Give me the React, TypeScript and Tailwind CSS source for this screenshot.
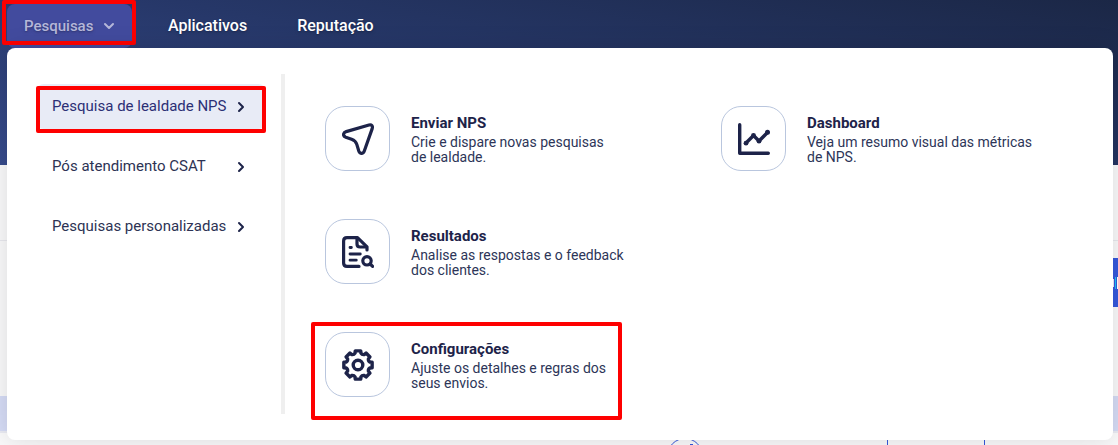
import { ReactNode } from "react";
import { ChevronDown, ChevronRight } from "lucide-react";

const SendIcon = () => (
  <svg viewBox="0 0 32 32" className="size-8" fill="none" stroke="currentColor" strokeWidth="3.2" strokeLinejoin="round">
    <path d="M27 2 L4.2 8.6 C.8 9.8.6 13 3.8 14.2 L9.6 16.2 C12.6 17.2 14 18.6 14.8 21.4 L16.8 28 C17.9 31.2 21.2 31.2 22.3 28 L30.2 5.6 C31 3 29.6 1.2 27 2Z" />
  </svg>
);

const ChartIcon = () => (
  <svg viewBox="0 0 32 32" className="size-8" fill="none" stroke="currentColor" strokeWidth="3.4" strokeLinecap="round" strokeLinejoin="round">
    <path d="M1.7 1.7V30.3H30.3" />
    <path d="M8 20 15.5 12.5 21 18 29.5 9.5" />
    <g fill="currentColor" stroke="none">
      <circle cx="8" cy="20.2" r="2.4" />
      <circle cx="15.5" cy="12.3" r="2.4" />
      <circle cx="21" cy="18.2" r="2.4" />
      <circle cx="29.5" cy="9.3" r="2.5" />
    </g>
  </svg>
);

const ReportIcon = () => (
  <svg viewBox="0 0 32 32" className="size-8" fill="none" stroke="currentColor" strokeWidth="3.2" strokeLinecap="round" strokeLinejoin="round">
    <path d="M17 30.4H5Q1.6 30.4 1.6 27V5Q1.6 1.6 5 1.6H15.5L25 10.8V14" />
    <path d="M15 2V8Q15 11 18 11H24.5" />
    <path d="M8 11.5H9.4M8 18H18.3M8 24.2H14.3" strokeWidth="2.8" />
    <circle cx="25" cy="24.8" r="4.2" />
    <path d="M28.2 28 30.6 30.4" />
  </svg>
);

const polar = (angle: number, radius: number) => {
  const rad = (angle * Math.PI) / 180;
  return `${(16 + radius * Math.cos(rad)).toFixed(2)} ${(16 + radius * Math.sin(rad)).toFixed(2)}`;
};

// eight teeth, each with a flat top and a rounded valley after it
const gearPath =
  [0, 45, 90, 135, 180, 225, 270, 315]
    .map(
      (a, i) =>
        `${i ? "L" : "M"}${polar(a - 11, 14.4)} L${polar(a + 11, 14.4)} L${polar(a + 14, 12.2)} Q${polar(a + 22.5, 10.8)} ${polar(a + 31, 12.2)}`
    )
    .join(" ") + "Z";

const GearIcon = () => (
  <svg viewBox="0 0 32 32" className="size-8" fill="none" stroke="currentColor" strokeWidth="3.4" strokeLinejoin="round">
    <path d={gearPath} />
    <circle cx="16" cy="16" r="4.8" />
  </svg>
);

const Highlight = ({ className }: { className: string }) => (
  <span
    aria-hidden="true"
    className={"pointer-events-none absolute rounded-xs border-4 border-[#fe0000] " + className}
  />
);

interface MenuItemProps {
  title: string;
  text: string;
  icon: ReactNode;
  highlighted?: boolean;
}

const MenuItem = ({ title, text, icon, highlighted = false }: MenuItemProps) => (
  <a href="#" className="relative col-start-1 flex items-start gap-[21px] even:col-start-2">
    <span className="flex size-[65px] shrink-0 items-center justify-center rounded-[20px] border border-[#b9c6de]">
      {icon}
    </span>
    <span className="flex flex-col pt-[5px]">
      <span className="text-[15px] leading-6 font-bold">{title}</span>
      <span className="text-sm leading-[15px] whitespace-pre text-[#2d3558]">{text}</span>
    </span>
    {highlighted && <Highlight className="-top-[10px] -left-[14px] h-[98px] w-[311px]" />}
  </a>
);

const surveys = ["Pesquisa de lealdade NPS", "Pós atendimento CSAT", "Pesquisas personalizadas"];

const Menu = () => (
  <div className="absolute top-12 right-[5px] left-[7px] z-10 flex rounded-lg bg-white pt-[26px] pb-[26px] text-[#1d2349] shadow-[0_0_24px_rgba(0,0,0,0.12)]">
    <ul className="flex w-[274px] shrink-0 flex-col gap-[15px] pt-[10px] pl-[29px]">
      {surveys.map((label, index) => (
        <li key={label} className="relative w-[230px]">
          <button
            className={`flex h-[45px] w-full items-center justify-between rounded-lg pr-[17px] pl-4 text-[15px] ${
              index === 0 ? "bg-[#e8ebf6] text-[#2c2f75]" : "text-[#2d3354]"
            }`}
          >
            {label}
            <ChevronRight className="size-4 text-[#1d2349]" strokeWidth={3} />
          </button>
          {index === 0 && <Highlight className="top-[2px] left-0 h-[47px] w-full" />}
        </li>
      ))}
    </ul>
    <div className="h-[340px] w-1 shrink-0 bg-[#efefef]" />
    <div className="grid flex-1 grid-cols-2 content-start gap-x-6 gap-y-12 pt-8 pr-5 pl-10">
      <MenuItem title="Enviar NPS" text={"Crie e dispare novas pesquisas\nde lealdade."} icon={<SendIcon />} />
      <MenuItem title="Dashboard" text={"Veja um resumo visual das métricas\nde NPS."} icon={<ChartIcon />} />
      <MenuItem
        title="Resultados"
        text={"Analise as respostas e o feedback\ndos clientes."}
        icon={<ReportIcon />}
      />
      <div aria-hidden="true" />
      <MenuItem
        title="Configurações"
        text={"Ajuste os detalhes e regras dos\nseus envios."}
        icon={<GearIcon />}
        highlighted
      />
    </div>
  </div>
);

const App = () => {
  return (
    <div className="relative h-screen overflow-hidden bg-[#f9f9fa] font-['HK_Grotesk',Roboto,sans-serif]">
      <header className="h-[165px] bg-[linear-gradient(12deg,#374b8c_0%,#263768_50%,#1b2746_100%)]">
        <nav className="flex h-12 items-end pl-[7px] text-base font-medium text-white">
          <div className="relative">
            <button className="flex h-11 w-[125px] items-center gap-2 rounded-lg bg-[#424b9e] pl-[17px] text-[15px] text-[#b5b7d9] text-shadow-md">
              Pesquisas
              <ChevronDown className="size-4" strokeWidth={3} />
            </button>
            <Highlight className="-top-1 -left-[5px] h-[45px] w-[134px]" />
          </div>
          <a href="#" className="ml-9 flex h-11 items-center text-shadow-md">
            Aplicativos
          </a>
          <a href="#" className="ml-[50px] flex h-11 items-center text-shadow-md">
            Reputação
          </a>
        </nav>
      </header>
      <Menu />
      <main>
        <div className="h-[76px] border-b border-[#e8e8ee]" />
        <div className="flex h-[155px] items-start justify-end pt-[17px]">
          <button aria-label="Novo" className="flex h-[49px] w-32 items-center justify-end gap-px bg-[#3558dc]">
            <span className="h-2 w-[3px] bg-[#e6e9fb]" />
            <span className="h-3 w-px bg-[#19c3fb]" />
            <span className="h-3 w-px bg-white" />
          </button>
        </div>
        <div className="h-[37px] border-b-2 border-[#e9eaf2] bg-[#d5dbf5]" />
        <div className="flex justify-end gap-[184px] pt-[5px] pr-[133px]">
          <div className="flex size-9 justify-center rounded-full border border-[#3558dc] pt-[5px] pl-3">
            <span className="h-1 w-[3px] bg-[#3558dc]" />
          </div>
          <div className="h-9 w-[98px] rounded-xs border border-[#3558dc]" />
        </div>
      </main>
    </div>
  );
};

export default App;
